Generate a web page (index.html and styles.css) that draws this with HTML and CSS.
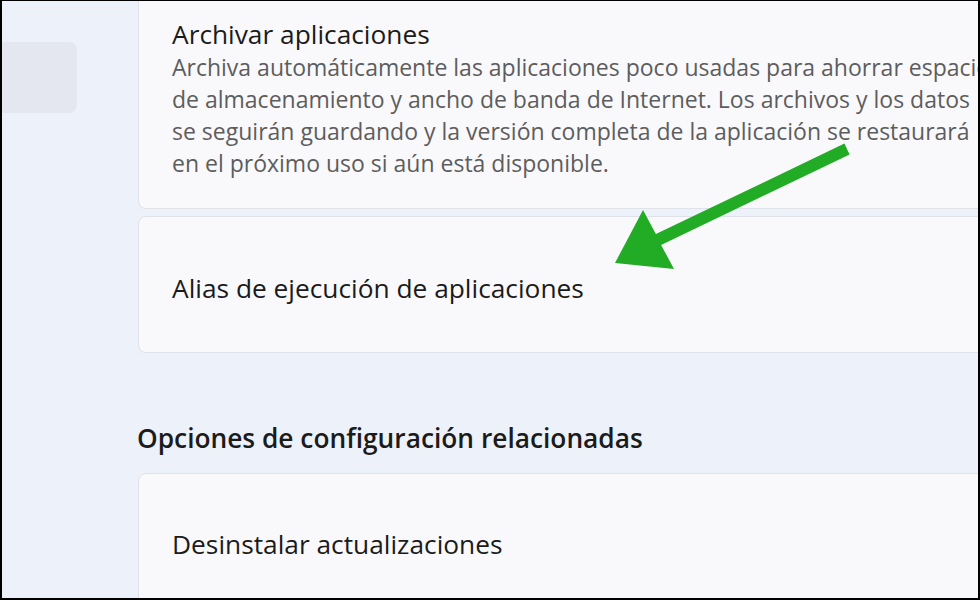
FILE: index.html
```html
<!DOCTYPE html>
<html lang="es">
<head>
<meta charset="utf-8">
<title>Aplicaciones avanzadas</title>
<link rel="stylesheet" href="styles.css">
</head>
<body>
<div class="frame">
  <div class="page">
    <aside class="sidebar">
      <div class="nav-pill"></div>
    </aside>
    <main class="main">
      <section class="card card-archive">
        <div class="card-title">Archivar aplicaciones</div>
        <div class="card-desc">
          <span class="line">Archiva automáticamente las aplicaciones poco usadas para ahorrar espacio</span>
          <span class="line">de almacenamiento y ancho de banda de Internet. Los archivos y los datos</span>
          <span class="line">se seguirán guardando y la versión completa de la aplicación se restaurará</span>
          <span class="line">en el próximo uso si aún está disponible.</span>
        </div>
      </section>
      <section class="card card-row">
        <div class="card-title">Alias de ejecución de aplicaciones</div>
      </section>
      <h2 class="section-heading">Opciones de configuración relacionadas</h2>
      <section class="card card-row card-last">
        <div class="card-title">Desinstalar actualizaciones</div>
      </section>
    </main>
    <svg class="arrow" width="980" height="600" viewBox="0 0 980 600" aria-hidden="true">
      <polygon fill="#22ab24" points="844.4,143.6 849.6,154.4 661.1,244.9 674,269 615,263 643,210 655.9,234.1"/>
    </svg>
  </div>
</div>
</body>
</html>
```
FILE: styles.css
```css
html, body {
  margin: 0;
  padding: 0;
  width: 980px;
  height: 600px;
  overflow: hidden;
  background: #000;
}

.frame {
  box-sizing: border-box;
  width: 980px;
  height: 600px;
  border-top: 1px solid #000;
  border-left: 2px solid #000;
  border-right: 2px solid #000;
  border-bottom: 2px solid #000;
  overflow: hidden;
}

.page {
  position: relative;
  display: flex;
  width: 100%;
  height: 100%;
  background: #edf1f9;
  font-family: "Open Sans", "Noto Sans", sans-serif;
  overflow: hidden;
}

.sidebar {
  flex: 0 0 136px;
  padding-top: 41px;
}

.nav-pill {
  width: 85px;
  height: 71px;
  margin-left: -10px;
  background: #e4e7ef;
  border-radius: 8px;
}

.main {
  flex: 0 0 880px;
  margin-top: -11px;
  display: flex;
  flex-direction: column;
}

.main > * {
  flex-shrink: 0;
}

.card {
  box-sizing: border-box;
  background: #f9f9fb;
  border: 1px solid #dfe2e9;
  border-radius: 8px;
  padding-left: 33px;
}

.card-title {
  font-size: 26.3px;
  line-height: 32px;
  color: #1b1b1b;
  white-space: nowrap;
}

.card-archive {
  padding-top: 27px;
  padding-bottom: 29px;
}

.card-desc {
  margin-top: 1px;
  font-size: 23px;
  line-height: 32px;
  color: #5d5d5d;
  white-space: nowrap;
}

.card-desc .line {
  display: block;
}

.card-row {
  margin-top: 7px;
  height: 137px;
  padding-top: 6px;
  display: flex;
  align-items: center;
}

.section-heading {
  margin: 69px 0 19px -1px;
  font-size: 26.3px;
  line-height: 32px;
  font-weight: 600;
  color: #1b1b1b;
}

.card-last {
  margin-top: 0;
  height: 140px;
  padding-top: 2px;
}

.arrow {
  position: absolute;
  left: -2px;
  top: -1px;
  pointer-events: none;
}
```
